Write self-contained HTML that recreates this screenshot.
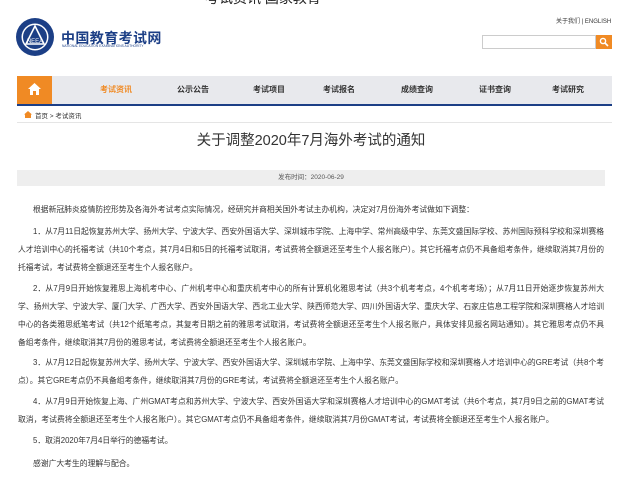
<!DOCTYPE html>
<html><head><meta charset="utf-8">
<style>
*{margin:0;padding:0;box-sizing:border-box}
body{width:622px;height:484px;overflow:hidden;background:#fff;font-family:"Liberation Sans","Noto Sans CJK SC",sans-serif;position:relative;color:#333}
.a{position:absolute}
.l{position:absolute;font-size:7.8px;line-height:12px;white-space:nowrap;color:#333}
.j{text-align:justify;text-align-last:justify;white-space:normal;overflow:hidden;height:12px}
.nav span{position:absolute;top:0;line-height:28px;font-size:8px;font-weight:bold;color:#333}
</style></head><body>
<div class="a" style="left:205px;top:-12px;font-size:14px;color:#222;white-space:nowrap">考试资讯 国家教育</div>
<svg class="a" style="left:15px;top:17px" width="40" height="40" viewBox="0 0 40 40">
<circle cx="20" cy="20" r="19" fill="#1c3f86"/>
<circle cx="20" cy="20" r="13.5" fill="#fff"/>
<circle cx="20" cy="20" r="12" fill="#1c3f86"/>
<path d="M20 9 L29 27 L11 27 Z" fill="none" stroke="#fff" stroke-width="1.6"/>
<text x="20" y="26" font-size="6" fill="#fff" text-anchor="middle" font-family="Liberation Sans">NEEA</text>
</svg>
<div class="a" style="left:61px;top:28px;font-size:14px;font-weight:bold;color:#1c3f86;letter-spacing:0.4px;white-space:nowrap">中国教育考试网</div>
<div class="a" style="left:62px;top:44px;font-size:3.3px;color:#1c3f86;white-space:nowrap">NATIONAL EDUCATION EXAMINATIONS AUTHORITY</div>
<div class="a" style="left:556px;top:16px;font-size:6px;color:#333;white-space:nowrap">关于我们 | ENGLISH</div>
<div class="a" style="left:482px;top:35px;width:114px;height:14px;border:1px solid #ccc"></div>
<div class="a" style="left:596px;top:35px;width:16px;height:14px;background:#f08a24"></div>
<svg class="a" style="left:599px;top:37px" width="10" height="10"><circle cx="4" cy="4" r="2.6" fill="none" stroke="#fff" stroke-width="1.4"/><path d="M6 6 L9 9" stroke="#fff" stroke-width="1.6"/></svg>
<div class="a nav" style="left:17px;top:76px;width:595px;height:28px;background:#e8e9ed">
<div class="a" style="left:0;top:0;width:35px;height:28px;background:#f08a24"></div>
<svg class="a" style="left:11px;top:7px" width="13" height="12"><path d="M6.5 0 L13 6 L11 6 L11 12 L8 12 L8 8 L5 8 L5 12 L2 12 L2 6 L0 6 Z" fill="#fff"/></svg>
<span style="left:83px;color:#f08a24">考试资讯</span>
<span style="left:160px">公示公告</span>
<span style="left:236px">考试项目</span>
<span style="left:306px">考试报名</span>
<span style="left:384px">成绩查询</span>
<span style="left:462px">证书查询</span>
<span style="left:535px">考试研究</span>
</div>
<div class="a" style="left:17px;top:104px;width:595px;height:2px;background:#1c3f86"></div>
<svg class="a" style="left:24px;top:111px" width="8" height="7"><path d="M4 0 L8 3.5 L7 3.5 L7 7 L1 7 L1 3.5 L0 3.5 Z" fill="#f08a24"/></svg>
<div class="a" style="left:35px;top:110px;font-size:6.5px;color:#333;white-space:nowrap">首页 &gt; 考试资讯</div>
<div class="a" style="left:17px;top:122px;width:595px;height:1px;background:#e5e5e5"></div>
<div class="a" style="left:0;width:622px;top:129px;text-align:center;font-size:14.5px;color:#333">关于调整2020年7月海外考试的通知</div>
<div class="a" style="left:17px;top:170px;width:588px;height:16px;background:#eee;text-align:center;font-size:6.5px;line-height:16px;color:#555">发布时间：2020-06-29</div>

<div class="l" style="left:33px;top:204px">根据新冠肺炎疫情防控形势及各海外考试考点实际情况，经研究并商相关国外考试主办机构，决定对7月份海外考试做如下调整：</div>
<div class="l j" style="left:33px;top:226px;width:571px">1．从7月11日起恢复苏州大学、扬州大学、宁波大学、西安外国语大学、深圳城市学院、上海中学、常州高级中学、东莞文盛国际学校、苏州国际预科学校和深圳赛格</div>
<div class="l j" style="left:18px;top:244px;width:586px">人才培训中心的托福考试（共10个考点，其7月4日和5日的托福考试取消，考试费将全额退还至考生个人报名账户）。其它托福考点仍不具备组考条件，继续取消其7月份的</div>
<div class="l" style="left:18px;top:262px">托福考试，考试费将全额退还至考生个人报名账户。</div>
<div class="l j" style="left:33px;top:283px;width:571px">2．从7月9日开始恢复雅思上海机考中心、广州机考中心和重庆机考中心的所有计算机化雅思考试（共3个机考考点，4个机考考场）；从7月11日开始逐步恢复苏州大</div>
<div class="l j" style="left:18px;top:301px;width:586px">学、扬州大学、宁波大学、厦门大学、广西大学、西安外国语大学、西北工业大学、陕西师范大学、四川外国语大学、重庆大学、石家庄信息工程学院和深圳赛格人才培训</div>
<div class="l j" style="left:18px;top:319px;width:586px">中心的各类雅思纸笔考试（共12个纸笔考点，其复考日期之前的雅思考试取消，考试费将全额退还至考生个人报名账户，具体安排见报名网站通知）。其它雅思考点仍不具</div>
<div class="l" style="left:18px;top:337px">备组考条件，继续取消其7月份的雅思考试，考试费将全额退还至考生个人报名账户。</div>
<div class="l j" style="left:33px;top:357px;width:571px">3．从7月12日起恢复苏州大学、扬州大学、宁波大学、西安外国语大学、深圳城市学院、上海中学、东莞文盛国际学校和深圳赛格人才培训中心的GRE考试（共8个考</div>
<div class="l" style="left:18px;top:375px">点）。其它GRE考点仍不具备组考条件，继续取消其7月份的GRE考试，考试费将全额退还至考生个人报名账户。</div>
<div class="l j" style="left:33px;top:396px;width:571px">4．从7月9日开始恢复上海、广州GMAT考点和苏州大学、宁波大学、西安外国语大学和深圳赛格人才培训中心的GMAT考试（共6个考点，其7月9日之前的GMAT考试</div>
<div class="l" style="left:18px;top:414px">取消，考试费将全额退还至考生个人报名账户）。其它GMAT考点仍不具备组考条件，继续取消其7月份GMAT考试，考试费将全额退还至考生个人报名账户。</div>
<div class="l" style="left:33px;top:435px">5．取消2020年7月4日举行的德福考试。</div>
<div class="l" style="left:33px;top:458px">感谢广大考生的理解与配合。</div>
</body></html>
